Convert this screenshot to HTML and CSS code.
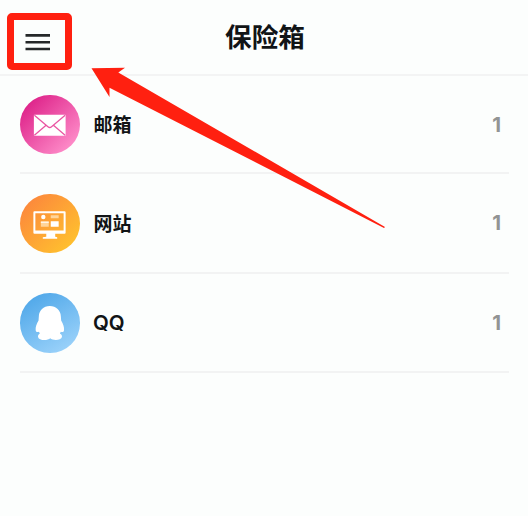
FILE: index.html
```html
<!DOCTYPE html>
<html lang="zh-CN">
<head>
<meta charset="utf-8">
<title>保险箱</title>
<link rel="stylesheet" href="styles.css">
</head>
<body>
<header class="topbar">
  <button class="menu" aria-label="菜单">
    <svg width="26" height="18" viewBox="0 0 26 18"><path d="M.5 2.4H25M.5 9.3H25M.5 16H25" stroke="#252829" stroke-width="2.6"/></svg>
  </button>
  <h1 class="title">保险箱</h1>
</header>
<main class="list">
  <div class="row">
    <span class="icon mail">
      <svg viewBox="0 0 60 60"><rect x="14" y="20" width="32" height="21" rx=".6" fill="#fff"/><path d="M14.5 20.5 28.2 32Q30 33.6 31.8 32L45.5 20.5M14.5 40.5 26.3 30.6M45.5 40.5 33.7 30.6" fill="none" stroke="#ea55a2" stroke-width="1.3"/></svg>
    </span>
    <span class="name">邮箱</span>
    <span class="count">1</span>
  </div>
  <div class="row">
    <span class="icon site">
      <svg viewBox="0 0 60 60"><path fill="#fff" fill-rule="evenodd" d="M14.5 17.5H45Q46 17.5 46 18.5V39Q46 40 45 40H35.5V43L37.5 43.5V45H23V43.5L26.500 43V40H14.500Q13.500 40 13.500 39V18.500Q13.500 17.500 14.500 17.500ZM15.500 19.500V36.800H44V19.500Z"/><circle cx="23.500" cy="23.200" r="2.200" fill="#fff"/><path d="M31 21.500H39V24.500H31ZM21 27.500H29V33H21Z" fill="#ffd59a"/><path d="M31 27.500H39V33H31ZM21 28H29V29H21Z" fill="#fff"/></svg>
    </span>
    <span class="name">网站</span>
    <span class="count">1</span>
  </div>
  <div class="row">
    <span class="icon qq">
      <svg viewBox="0 0 60 60"><path fill="#fff" d="M30 13.200C36.500 13.200 41 17.600 41.200 23.500L41.500 27.800C43.500 31 44.700 34.500 44.400 37.500C44.200 39.300 43 39.800 41.200 39.200L40.200 40.900C42 41.700 42.500 43 42.300 44.300C41.500 48 33 48.200 30.500 45.600C28 48.200 19 48.200 18.200 44.300C18 43 18.600 41.900 20 40.900L19.100 39.200C17.400 39.800 16 39.300 15.800 37.500C15.500 34.500 16.700 31 18.700 27.800L19 23.500C19.200 17.600 23.700 13.200 30 13.200Z"/></svg>
    </span>
    <span class="name latin">QQ</span>
    <span class="count">1</span>
  </div>
</main>
<svg class="pointer" width="528" height="240" viewBox="0 0 528 240"><path d="M91.500 68.300 125 67.700 118.300 72.500 385 227 384 228 109.500 87.800V97Z" fill="#ff2010"/></svg>
</body>
</html>
```
FILE: styles.css
```css
* { box-sizing: border-box; }
body {
  margin: 0;
  min-height: 516px;
  background: #fcfefd;
  color: #111416;
  font-family: "Noto Sans CJK SC", sans-serif;
}
.topbar {
  display: grid;
  grid-template-columns: 65px 1fr 65px;
  align-items: start;
  height: 76px;
  padding: 13px 5px 0 7px;
  border-bottom: 2px solid #f3f4f4;
}
.menu {
  display: flex;
  width: 65px;
  height: 57px;
  padding: 13px 0 0 11px;
  border: 7px solid #ff2010;
  border-radius: 5px;
  background: transparent;
}
.menu svg { display: block; }
.title {
  margin: 3px 0 0;
  font-size: 26.6px;
  line-height: 40px;
  font-weight: 700;
  text-align: center;
}
.list { padding: 0 19px 0 20px; }
.row {
  display: flex;
  align-items: center;
  height: 99.5px;
  padding-top: 1px;
  border-bottom: 2px solid #f2f3f3;
}
.row:first-child { height: 98px; }
.icon {
  width: 59.5px;
  height: 59.5px;
  border-radius: 50%;
}
.icon svg { display: block; width: 100%; height: 100%; }
.mail { background: linear-gradient(135deg, #dd2088 10%, #ff90cb 90%); }
.site { background: linear-gradient(135deg, #fc873c 10%, #ffc22e 90%); }
.qq { background: linear-gradient(150deg, #50a8e9 10%, #9bd2fa 90%); }
.name {
  margin: -1px 0 0 14px;
  font-size: 19px;
  line-height: 28px;
  font-weight: 700;
}
.latin {
  margin: 1px 0 0 13.5px;
  font-family: Inter, sans-serif;
  font-size: 20.5px;
  font-weight: 600;
}
.count {
  margin-left: auto;
  padding-right: 8px;
  color: #929494;
  font: 700 20.5px/28px Inter, sans-serif;
}
.pointer {
  position: absolute;
  top: 0;
  left: 0;
  pointer-events: none;
}
```
